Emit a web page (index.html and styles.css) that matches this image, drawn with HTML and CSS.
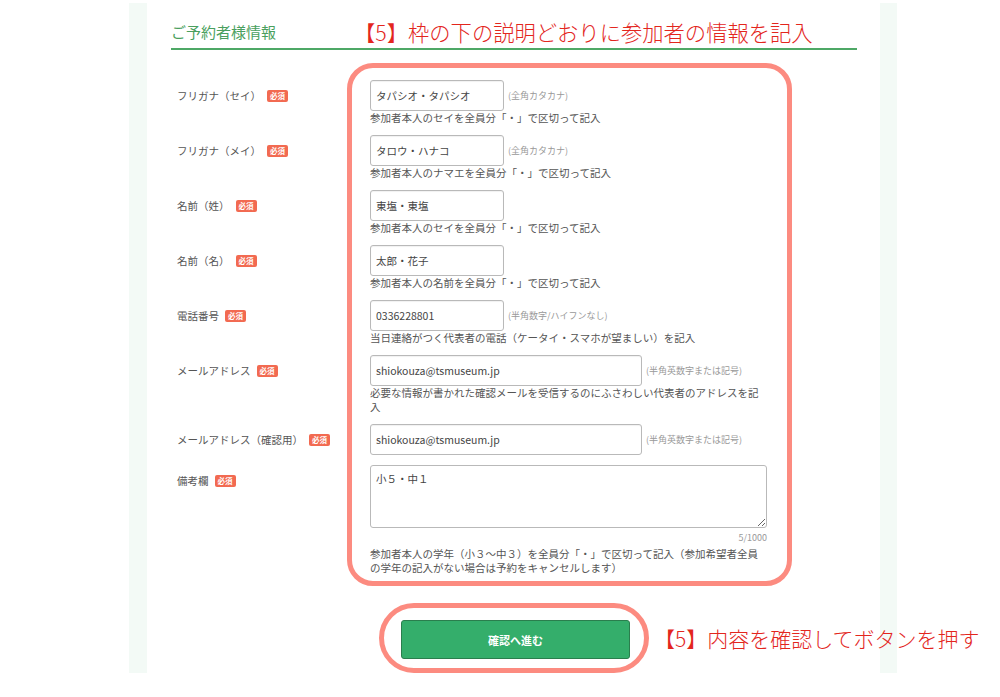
FILE: index.html
```html
<!DOCTYPE html>
<html lang="ja">
<head>
<meta charset="utf-8">
<title>ご予約者様情報</title>
<link rel="stylesheet" href="styles.css">
</head>
<body>
<div class="frame">
  <div class="main">
    <div class="heading-row">
      <h2 class="heading">ご予約者様情報</h2>
      <p class="note note-top">【5】枠の下の説明どおりに参加者の情報を記入</p>
    </div>

    <div class="form">
      <div class="box"></div>

      <div class="label r1 first">フリガナ（セイ）<span class="req">必須</span></div>
      <div class="field r1 first">
        <div class="line"><input class="inp short" type="text" value="タパシオ・タパシオ"><span class="hint">(全角カタカナ)</span></div>
        <p class="desc">参加者本人のセイを全員分「・」で区切って記入</p>
      </div>

      <div class="label r2">フリガナ（メイ）<span class="req">必須</span></div>
      <div class="field r2">
        <div class="line"><input class="inp short" type="text" value="タロウ・ハナコ"><span class="hint">(全角カタカナ)</span></div>
        <p class="desc">参加者本人のナマエを全員分「・」で区切って記入</p>
      </div>

      <div class="label r3">名前（姓）<span class="req">必須</span></div>
      <div class="field r3">
        <div class="line"><input class="inp short" type="text" value="東塩・東塩"></div>
        <p class="desc">参加者本人のセイを全員分「・」で区切って記入</p>
      </div>

      <div class="label r4">名前（名）<span class="req">必須</span></div>
      <div class="field r4">
        <div class="line"><input class="inp short" type="text" value="太郎・花子"></div>
        <p class="desc">参加者本人の名前を全員分「・」で区切って記入</p>
      </div>

      <div class="label r5">電話番号<span class="req">必須</span></div>
      <div class="field r5">
        <div class="line"><input class="inp short" type="text" value="0336228801"><span class="hint">(半角数字/ハイフンなし)</span></div>
        <p class="desc">当日連絡がつく代表者の電話（ケータイ・スマホが望ましい）を記入</p>
      </div>

      <div class="label r6">メールアドレス<span class="req">必須</span></div>
      <div class="field r6">
        <div class="line"><input class="inp long" type="text" value="shiokouza@tsmuseum.jp"><span class="hint">(半角英数字または記号)</span></div>
        <p class="desc">必要な情報が書かれた確認メールを受信するのにふさわしい代表者のアドレスを記入</p>
      </div>

      <div class="label r7">メールアドレス（確認用）<span class="req">必須</span></div>
      <div class="field r7">
        <div class="line"><input class="inp long" type="text" value="shiokouza@tsmuseum.jp"><span class="hint">(半角英数字または記号)</span></div>
      </div>

      <div class="label r8">備考欄<span class="req">必須</span></div>
      <div class="field r8 last">
        <textarea class="area">小５・中１</textarea>
        <div class="counter">5/1000</div>
        <p class="desc desc-area">参加者本人の学年（小３〜中３）を全員分「・」で区切って記入（参加希望者全員の学年の記入がない場合は予約をキャンセルします）</p>
      </div>
    </div>

    <div class="submit-row">
      <div class="pill"><button class="btn" type="button">確認へ進む</button></div>
      <p class="note note-btn">【5】内容を確認してボタンを押す</p>
    </div>
  </div>
</div>
</body>
</html>
```

FILE: styles.css
```css
* { box-sizing: border-box; }
html, body { margin: 0; padding: 0; background: #fff; }
body {
  font-family: "Noto Sans CJK JP", "Noto Sans", sans-serif;
  color: #555;
}
.frame {
  margin: 3px 0 0 129px;
  width: 768px;
  height: 670px;
  background: #f3faf6;
  padding: 0 17px 0 18px;
}
.main {
  background: #fff;
  height: 100%;
  padding: 17px 23px 0 24px;
}
.heading-row {
  display: flex;
  align-items: center;
  height: 30px;
  padding-bottom: 4px;
  border-bottom: 2px solid #4ea866;
}
.heading {
  margin: 0;
  font-size: 15px;
  font-weight: 400;
  color: #4a9f5e;
  line-height: 24px;
  width: 183px;
  flex: none;
}
.note {
  margin: 0;
  color: #e3261d;
  font-size: 21.3px;
  font-weight: 300;
  line-height: 24px;
  white-space: nowrap;
}
.form {
  display: grid;
  grid-template-columns: 170px 445px;
  margin: 13px 0 0 6px;
}
.box {
  grid-column: 2;
  grid-row: 1 / 9;
  border: 5px solid #fc8b80;
  border-radius: 26px;
}
.r1 { grid-row: 1; }
.r2 { grid-row: 2; }
.r3 { grid-row: 3; }
.r4 { grid-row: 4; }
.r5 { grid-row: 5; }
.r6 { grid-row: 6; }
.r7 { grid-row: 7; }
.r8 { grid-row: 8; }
.label {
  grid-column: 1;
  font-size: 10.5px;
  line-height: 31px;
  color: #555;
  display: flex;
  align-items: center;
  height: 31px;
}
.req {
  display: inline-block;
  margin-left: 6px;
  background: #f26a51;
  color: #fff;
  font-size: 7.5px;
  font-weight: 700;
  line-height: 12px;
  height: 12px;
  padding: 0 3px;
  border-radius: 2px;
}
.field {
  grid-column: 2;
  padding: 0 25px 10px 23px;
}
.label.first, .field.first { margin-top: 17px; }
.field.last { padding-bottom: 11px; }
.line {
  display: flex;
  align-items: center;
}
.inp {
  height: 31px;
  border: 1px solid #b9b9b9;
  border-radius: 3px;
  box-shadow: inset 0 1px 1px rgba(0,0,0,0.06);
  padding: 0 5px;
  font-family: "Noto Sans CJK JP", "Noto Sans", sans-serif;
  font-size: 10.5px;
  font-weight: 400;
  color: #444;
  background: #fff;
  margin: 0;
}
.short { width: 134px; }
.long { width: 272px; }
.hint {
  margin-left: 4px;
  font-size: 9px;
  color: #999;
}
.desc {
  margin: 0;
  font-size: 10.5px;
  line-height: 14px;
  color: #555;
}
.area {
  display: block;
  width: 397px;
  height: 63px;
  border: 1px solid #b9b9b9;
  border-radius: 3px;
  padding: 5px 5px;
  font-family: "Noto Sans CJK JP", "Noto Sans", sans-serif;
  font-size: 10.5px;
  color: #444;
  margin: 0;
}
.counter {
  text-align: right;
  font-size: 9px;
  line-height: 14px;
  color: #999;
  margin-top: 3px;
}
.desc-area { margin-top: 2px; }
.submit-row {
  display: grid;
  grid-template-columns: minmax(0, 1fr) auto minmax(0, 1fr);
  align-items: center;
  margin-top: 17px;
  column-gap: 5px;
}
.pill {
  grid-column: 2;
  border: 5px solid #fc8b80;
  border-radius: 36px;
  padding: 12px 14px 9px 17px;
}
.btn {
  display: block;
  width: 229px;
  height: 39px;
  background: #34ae6b;
  border: 1px solid #2a7e4d;
  border-radius: 3px;
  color: #fff;
  font-family: "Noto Sans CJK JP", "Noto Sans", sans-serif;
  font-size: 11px;
  font-weight: 700;
  margin: 0;
  padding: 0;
}
.note-btn {
  grid-column: 3;
  font-size: 21px;
  padding-top: 0;
}
```
